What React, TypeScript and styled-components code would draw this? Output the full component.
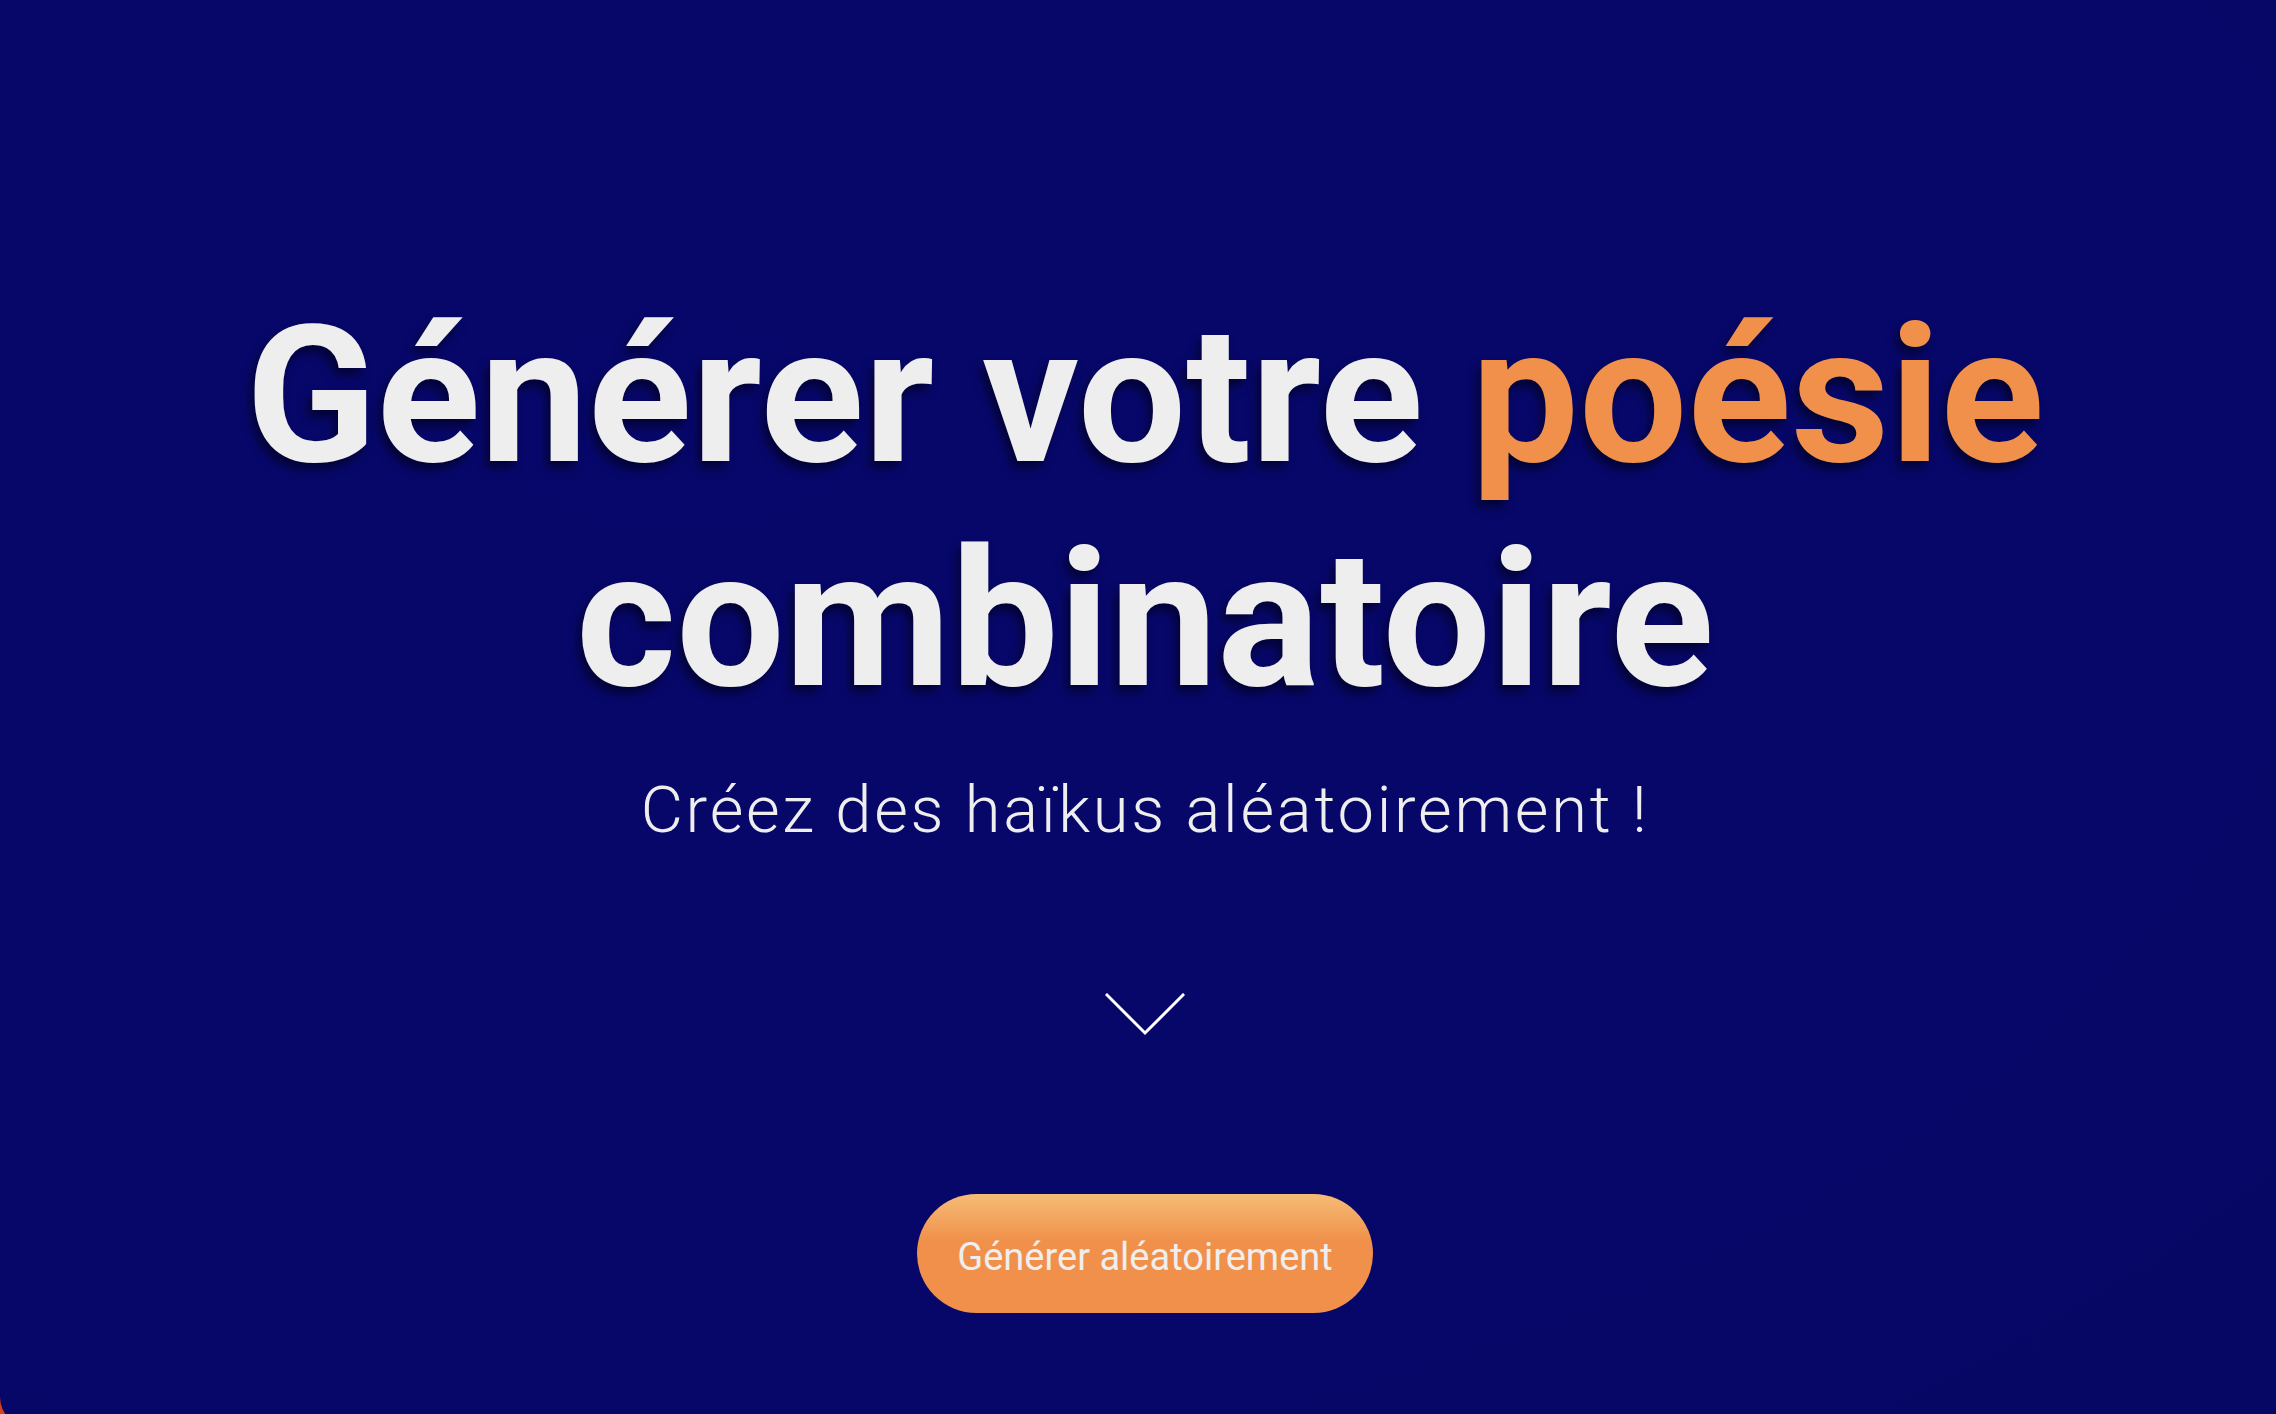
import React from "react";
import styled, { createGlobalStyle } from "styled-components";

const GlobalStyle = createGlobalStyle`
  html, body {
    margin: 0;
    padding: 0;
    background: #d8431c;
    overflow: hidden;
  }
  * { box-sizing: border-box; }
`;

const Hero = styled.section`
  min-height: 1428px;
  background: radial-gradient(ellipse at 30% 30%, #07076b 0%, #07076a 60%, #060664 100%);
  border-bottom-left-radius: 31px;
  display: flex;
  flex-direction: column;
  align-items: center;
  padding: 284px 0 0 14px;
  font-family: Roboto, "Liberation Sans", sans-serif;
`;

const Title = styled.h1`
  margin: 0;
  font-size: 192px;
  line-height: 224px;
  font-weight: 700;
  color: #eeeeee;
  text-align: center;
  text-shadow: -4px 7px 10px rgba(0, 0, 20, 0.6);
`;

const Accent = styled.span`
  color: #f0904a;
`;

const Subtitle = styled.p`
  margin: 39px 0 0;
  font-size: 65px;
  line-height: 78px;
  font-weight: 300;
  letter-spacing: 2.75px;
  color: #eeeeee;
`;

const ScrollHint = styled.svg`
  display: block;
  margin-top: 144px;
  width: 80px;
  height: 44px;
`;

const GenerateButton = styled.button`
  margin-top: 157px;
  width: 456px;
  height: 119px;
  padding: 6px 0 0;
  border: none;
  border-radius: 60px;
  background: linear-gradient(180deg, #f6bc76 0%, #f0904a 40%, #f0904a 100%);
  color: #eeeeee;
  font-family: Roboto, "Liberation Sans", sans-serif;
  font-size: 38px;
  font-weight: 400;
  display: flex;
  align-items: center;
  justify-content: center;
  cursor: pointer;
`;

export default function App() {
  return (
    <>
      <GlobalStyle />
      <Hero>
        <Title>
          Générer votre <Accent>poésie</Accent>
          <br />
          combinatoire
        </Title>
        <Subtitle>Créez des haïkus aléatoirement !</Subtitle>
        <ScrollHint viewBox="0 0 80 44" fill="none">
          <polyline
            points="2,2 40,40 78,2"
            stroke="#ffffff"
            strokeWidth="3"
            strokeLinecap="square"
          />
        </ScrollHint>
        <GenerateButton>Générer aléatoirement</GenerateButton>
      </Hero>
    </>
  );
}
